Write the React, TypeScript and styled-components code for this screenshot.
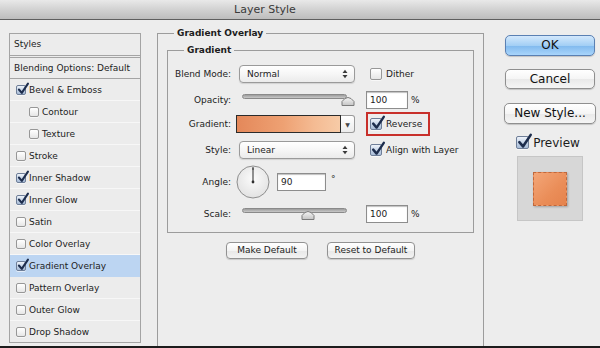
import React from "react";
import styled, { createGlobalStyle } from "styled-components";

const GlobalStyle = createGlobalStyle`
  html, body { margin: 0; padding: 0; background: #ededed; }
  body {
    font-family: "DejaVu Sans", "Noto Sans", sans-serif;
    font-size: 9px;
    color: #1c1c1c;
  }
  * { box-sizing: border-box; }
`;

const Window = styled.div`
  width: 600px;
  height: 348px;
  overflow: hidden;
  display: flex;
  flex-direction: column;
  background: #ededed;
  border-bottom: 2px solid #1c1c1c;
`;

const TitleBar = styled.div`
  height: 20px;
  flex-shrink: 0;
  border-bottom: 1px solid #5f5f5f;
  background: linear-gradient(#e9e9e9, #d4d4d4 45%, #bdbdbd);
  text-align: center;
  padding-right: 70px;
  font-size: 11px;
  line-height: 19px;
  color: #3a3a3a;
`;

const Body = styled.div`
  flex: 1;
  min-height: 0;
  display: flex;
  align-items: flex-start;
  padding-top: 7px;
`;

/* ---------- sidebar ---------- */
const Sidebar = styled.div`
  margin-top: 6px;
  margin-left: 9px;
  width: 132px;
  flex-shrink: 0;
  border: 1px solid #a4a4a4;
  background: #ececec;
`;

const SideHeader = styled.div<{ $double?: boolean }>`
  height: ${(p) => (p.$double ? 24 : 21)}px;
  line-height: 21px;
  padding-left: 4px;
  border-bottom: ${(p) => (p.$double ? "3px double #a4a4a4" : "1px solid #a4a4a4")};
`;

const SideItem = styled.div<{ $indent?: boolean; $active?: boolean }>`
  height: 22px;
  display: flex;
  align-items: center;
  gap: 3px;
  padding-left: ${(p) => (p.$indent ? 19 : 6)}px;
  background: ${(p) => (p.$active ? "#bcd5f2" : "transparent")};
  border-bottom: 1px solid ${(p) => (p.$active ? "#bcd5f2" : "#f7f7f7")};
  &:last-child { border-bottom: none; height: 21px; }
`;

/* ---------- checkbox ---------- */
const Box = styled.span<{ $size: number; $checked: boolean }>`
  position: relative;
  flex-shrink: 0;
  width: ${(p) => p.$size}px;
  height: ${(p) => p.$size}px;
  border: 1px solid ${(p) => (p.$checked ? "#6e7e98" : "#979797")};
  border-radius: 2px;
  background: ${(p) =>
    p.$checked
      ? "linear-gradient(#eef3fa, #c3d2e6 55%, #a9bdd8)"
      : "linear-gradient(#ffffff, #f3f3f3 50%, #e6e6e6)"};
  box-shadow: 0 1px 0 rgba(255, 255, 255, 0.6);
`;

const Tick = styled.svg`
  position: absolute;
  left: 0;
  top: -3px;
  overflow: visible;
`;

const CheckBox = ({ checked, size }: { checked: boolean; size: number }) => (
  <Box $size={size} $checked={checked}>
    {checked && (
      <Tick width={size + 2} height={size + 2} viewBox="0 0 14 14">
        <path
          d="M2.2 7.6 L5.6 11.6 L12.8 0.8"
          fill="none"
          stroke="#1d2d4d"
          strokeWidth="2.4"
          strokeLinecap="round"
          strokeLinejoin="round"
        />
      </Tick>
    )}
  </Box>
);

/* ---------- main panel ---------- */
const Fieldset = styled.fieldset<{ $tall?: boolean }>`
  margin: 0;
  padding: 0;
  min-width: 0;
  border: 1px solid #9c9c9c;
  ${(p) => (p.$tall ? "height: 340px;" : "")}
`;

const Legend = styled.legend`
  margin-left: 16px;
  padding: 0 3px;
  font-weight: bold;
  line-height: 12px;
  color: #1c1c1c;
`;

const Outer = styled(Fieldset)`
  margin-left: 16px;
  width: 327px;
  flex-shrink: 0;
`;

const OuterContent = styled.div`
  padding: 5px 9px 0;
`;

const InnerContent = styled.div`
  padding: 8px 0 8px;
`;

const Row = styled.div<{ $h: number; $mt: number }>`
  display: flex;
  align-items: center;
  height: ${(p) => p.$h}px;
  margin-top: ${(p) => p.$mt}px;
`;

const Label = styled.div`
  width: 63px;
  flex-shrink: 0;
  text-align: right;
`;

const MainCell = styled.div<{ $pl: number; $top?: boolean }>`
  width: 135px;
  flex-shrink: 0;
  height: 100%;
  display: flex;
  align-items: ${(p) => (p.$top ? "flex-start" : "center")};
  padding-left: ${(p) => p.$pl}px;
`;

const SideCell = styled.div`
  display: flex;
  align-items: center;
  gap: 4px;
  padding-left: 4px;
`;

const InputSide = styled.div`
  display: flex;
  align-items: center;
  gap: 3px;
`;

const Select = styled.div`
  width: 116px;
  height: 18px;
  border: 1px solid #9a9a9a;
  border-radius: 4px;
  background: linear-gradient(#ffffff, #f6f6f6 50%, #ebebeb);
  box-shadow: 0 1px 1px rgba(0, 0, 0, 0.12);
  display: flex;
  align-items: center;
  justify-content: space-between;
  padding: 0 6px 0 7px;
`;

const Arrows = () => (
  <svg width="6" height="10" viewBox="0 0 6 10">
    <path d="M0.5 4 L3 0.8 L5.5 4 Z M0.5 6 L3 9.2 L5.5 6 Z" fill="#3a3a3a" />
  </svg>
);

const TextInput = styled.div<{ $w: number }>`
  width: ${(p) => p.$w}px;
  height: 18px;
  border: 1px solid #8d8d8d;
  background: #fff;
  box-shadow: inset 0 1px 1px rgba(0, 0, 0, 0.25);
  padding-left: 3px;
  line-height: 16px;
`;

const Slider = styled.div`
  position: relative;
  width: 113px;
  height: 100%;
`;

const Track = styled.div`
  margin-top: 4px;
  width: 105px;
  height: 5px;
  border: 1px solid #8a8a8a;
  border-radius: 3px;
  background: linear-gradient(#9c9c9c, #c9c9c9);
`;

const Thumb = styled.svg`
  position: absolute;
  top: 5px;
`;

const SliderControl = ({ pct }: { pct: number }) => (
  <Slider>
    <Track />
    <Thumb width="14" height="11" viewBox="0 0 14 11" style={{ left: pct * 99 }}>
      <defs>
        <linearGradient id="thumbG" x1="0" y1="0" x2="0" y2="1">
          <stop offset="0" stopColor="#f6f6f6" />
          <stop offset="1" stopColor="#c4c4c4" />
        </linearGradient>
      </defs>
      <path
        d="M1 10.5 L1 6.5 Q7 -1.5 13 6.5 L13 10.5 Z"
        fill="url(#thumbG)"
        stroke="#7b7b7b"
        strokeWidth="1"
      />
    </Thumb>
  </Slider>
);

const Swatch = styled.div`
  width: 105px;
  height: 18px;
  border: 1px solid #2b2b2b;
  background: linear-gradient(90deg, #e4885a, #eea173 45%, #f4bb93 75%, #f7cba7);
`;

const SwatchButton = styled.div`
  width: 14px;
  height: 18px;
  border: 1px solid #9a9a9a;
  border-left: none;
  border-radius: 0 3px 3px 0;
  background: linear-gradient(#ffffff, #ececec);
  display: flex;
  align-items: center;
  justify-content: center;
  font-size: 6px;
  color: #444;
`;

const RedBox = styled.div`
  height: 24px;
  width: 64px;
  border: 2px solid #c8302b;
  display: flex;
  align-items: center;
  gap: 4px;
  padding-left: 2px;
`;

const Degree = styled.span`
  align-self: center;
  margin-left: 5px;
  margin-top: -6px;
`;

const Dial = () => (
  <svg width="34" height="34" viewBox="0 0 34 34">
    <defs>
      <radialGradient id="dialG" cx="0.5" cy="0.4" r="0.6">
        <stop offset="0" stopColor="#fbfbfb" />
        <stop offset="1" stopColor="#e2e2e2" />
      </radialGradient>
    </defs>
    <circle cx="17" cy="17" r="16" fill="url(#dialG)" stroke="#8e8e8e" />
    <line x1="17" y1="17" x2="17" y2="2" stroke="#3c3c3c" strokeWidth="1.1" />
    <line x1="16" y1="4" x2="18" y2="4" stroke="#3c3c3c" strokeWidth="1" />
    <circle cx="17" cy="17" r="1.4" fill="#2e2e2e" />
  </svg>
);

const ButtonRow = styled.div`
  margin-top: 9px;
  display: flex;
  justify-content: center;
  gap: 19px;
`;

const SmallButton = styled.div<{ $w: number }>`
  width: ${(p) => p.$w}px;
  height: 17px;
  border: 1px solid #929292;
  border-radius: 4px;
  background: linear-gradient(#ffffff, #f4f4f4 50%, #e8e8e8 51%, #f3f3f3);
  box-shadow: 0 1px 1px rgba(0, 0, 0, 0.15);
  text-align: center;
  line-height: 15px;
`;

/* ---------- right column ---------- */
const RightCol = styled.div`
  margin-top: 8px;
  margin-left: 20px;
  width: 92px;
  flex-shrink: 0;
  display: flex;
  flex-direction: column;
  align-items: center;
`;

const AquaButton = styled.div<{ $w: number; $h: number; $mt: number; $primary?: boolean }>`
  width: ${(p) => p.$w}px;
  height: ${(p) => p.$h}px;
  margin-top: ${(p) => p.$mt}px;
  border: 1px solid ${(p) => (p.$primary ? "#5a80b3" : "#8f8f8f")};
  border-radius: 5px;
  background: ${(p) =>
    p.$primary
      ? "linear-gradient(#d3e8fc, #a3cff5 50%, #80b9ee 51%, #a9d5fb)"
      : "linear-gradient(#ffffff, #f5f5f5 50%, #e9e9e9 51%, #f5f5f5)"};
  box-shadow: 0 1px 1px rgba(0, 0, 0, 0.18);
  font-size: 12px;
  line-height: ${(p) => p.$h - 2}px;
  text-align: center;
  color: #111;
`;

const PreviewRow = styled.div`
  margin-top: 12px;
  display: flex;
  align-items: center;
  gap: 4px;
  font-size: 12px;
  height: 13px;
  margin-left: -4px;
`;

const Thumbnail = styled.div`
  margin-top: 7px;
  width: 66px;
  height: 65px;
  border: 1px solid #c6c6c6;
  background: #d7d7d7;
  display: flex;
  align-items: center;
  justify-content: center;
`;

const PreviewSquare = styled.div`
  width: 34px;
  height: 34px;
  border: 1px dashed #c0683c;
  background: linear-gradient(135deg, #f3a678, #ea8d58 60%, #e5834d);
  box-shadow: 1px 1px 2px rgba(0, 0, 0, 0.25);
`;

const sideItems: { name: string; checked: boolean; indent?: boolean; active?: boolean }[] = [
  { name: "Bevel & Emboss", checked: true },
  { name: "Contour", checked: false, indent: true },
  { name: "Texture", checked: false, indent: true },
  { name: "Stroke", checked: false },
  { name: "Inner Shadow", checked: true },
  { name: "Inner Glow", checked: true },
  { name: "Satin", checked: false },
  { name: "Color Overlay", checked: false },
  { name: "Gradient Overlay", checked: true, active: true },
  { name: "Pattern Overlay", checked: false },
  { name: "Outer Glow", checked: false },
  { name: "Drop Shadow", checked: false },
];

export default function App() {
  return (
    <>
      <GlobalStyle />
      <Window>
        <TitleBar>Layer Style</TitleBar>
        <Body>
          <Sidebar>
            <SideHeader $double>Styles</SideHeader>
            <SideHeader>Blending Options: Default</SideHeader>
            {sideItems.map((it) => (
              <SideItem key={it.name} $indent={it.indent} $active={it.active}>
                <CheckBox checked={it.checked} size={10} />
                <span>{it.name}</span>
              </SideItem>
            ))}
          </Sidebar>

          <Outer $tall>
            <Legend>Gradient Overlay</Legend>
            <OuterContent>
              <Fieldset>
                <Legend>Gradient</Legend>
                <InnerContent>
                  <Row $h={20} $mt={0}>
                    <Label>Blend Mode:</Label>
                    <MainCell $pl={8}>
                      <Select>
                        <span>Normal</span>
                        <Arrows />
                      </Select>
                    </MainCell>
                    <SideCell>
                      <CheckBox checked={false} size={12} />
                      <span>Dither</span>
                    </SideCell>
                  </Row>

                  <Row $h={20} $mt={6}>
                    <Label>Opacity:</Label>
                    <MainCell $pl={11} $top>
                      <SliderControl pct={1} />
                    </MainCell>
                    <InputSide>
                      <TextInput $w={42}>100</TextInput>
                      <span>%</span>
                    </InputSide>
                  </Row>

                  <Row $h={24} $mt={2}>
                    <Label>Gradient:</Label>
                    <MainCell $pl={5}>
                      <Swatch />
                      <SwatchButton>▼</SwatchButton>
                    </MainCell>
                    <RedBox>
                      <CheckBox checked size={12} />
                      <span>Reverse</span>
                    </RedBox>
                  </Row>

                  <Row $h={20} $mt={4}>
                    <Label>Style:</Label>
                    <MainCell $pl={8}>
                      <Select>
                        <span>Linear</span>
                        <Arrows />
                      </Select>
                    </MainCell>
                    <SideCell>
                      <CheckBox checked size={12} />
                      <span>Align with Layer</span>
                    </SideCell>
                  </Row>

                  <Row $h={34} $mt={5}>
                    <Label>Angle:</Label>
                    <MainCell $pl={5}>
                      <Dial />
                      <TextInput $w={49} style={{ marginLeft: 7 }}>
                        90
                      </TextInput>
                      <Degree>°</Degree>
                    </MainCell>
                  </Row>

                  <Row $h={20} $mt={5}>
                    <Label>Scale:</Label>
                    <MainCell $pl={11} $top>
                      <SliderControl pct={0.6} />
                    </MainCell>
                    <InputSide>
                      <TextInput $w={42}>100</TextInput>
                      <span>%</span>
                    </InputSide>
                  </Row>
                </InnerContent>
              </Fieldset>

              <ButtonRow>
                <SmallButton $w={82}>Make Default</SmallButton>
                <SmallButton $w={88}>Reset to Default</SmallButton>
              </ButtonRow>
            </OuterContent>
          </Outer>

          <RightCol>
            <AquaButton $w={90} $h={21} $mt={0} $primary>
              OK
            </AquaButton>
            <AquaButton $w={90} $h={20} $mt={13}>
              Cancel
            </AquaButton>
            <AquaButton $w={92} $h={21} $mt={14}>
              New Style...
            </AquaButton>
            <PreviewRow>
              <CheckBox checked size={13} />
              <span>Preview</span>
            </PreviewRow>
            <Thumbnail>
              <PreviewSquare />
            </Thumbnail>
          </RightCol>
        </Body>
      </Window>
    </>
  );
}
